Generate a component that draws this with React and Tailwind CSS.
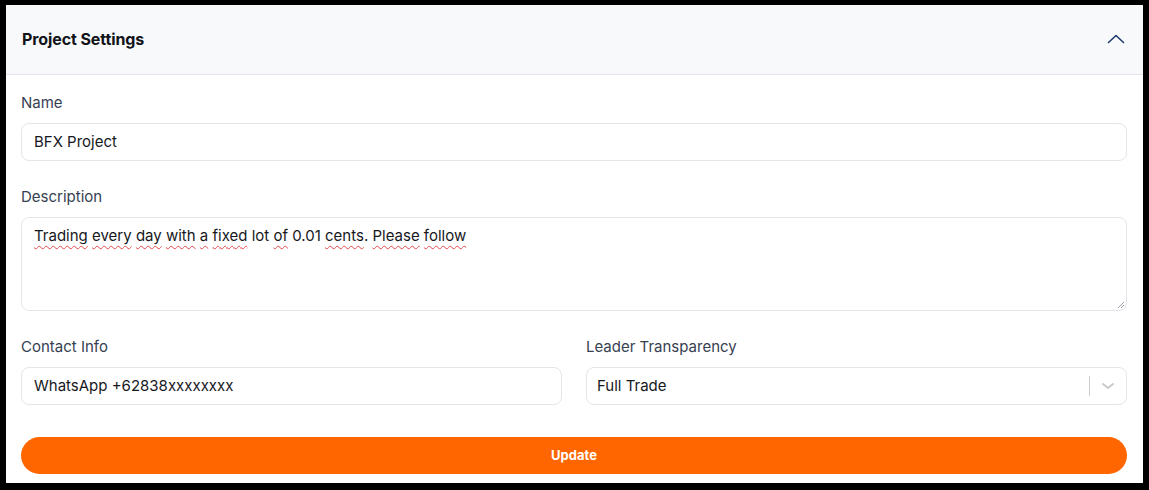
import React from "react";

const font = { fontFamily: "Inter, 'Liberation Sans', sans-serif" };

function W({ children, u = true }) {
  return u ? (
    <span className="underline decoration-wavy decoration-[#e5484d] decoration-1 underline-offset-[4px]">{children}</span>
  ) : (
    <span>{children}</span>
  );
}

export default function App() {
  return (
    <div className="w-[1149px] h-[490px] bg-black pt-[5px] pl-[6px]" style={font}>
      <div className="w-[1137px] h-[478px] bg-white flex flex-col">
        <div className="h-[70px] bg-[#f8f9fb] border-b border-[#e3e5ea] flex items-center justify-between pl-4 pr-[17px] pb-[2px]">
          <span className="text-[16px] font-bold text-[#111318] tracking-[-0.1px]">Project Settings</span>
          <svg width="20" height="12" viewBox="0 0 20 12" fill="none">
            <path d="M2.5 9.5 L10 2.5 L17.5 9.5" stroke="#1f3a6b" strokeWidth="1.6" strokeLinecap="round" strokeLinejoin="round" />
          </svg>
        </div>
        <div className="pl-[15px] pr-[16px] pt-[17px] flex flex-col">
          <label className="text-[15px] leading-[22px] text-[#364152] mb-[9px]">Name</label>
          <div className="h-[38px] border border-[#e3e5ea] rounded-[8px] flex items-center px-3 text-[15px] text-[#16181d]">
            BFX Project
          </div>
          <label className="text-[15px] leading-[22px] text-[#364152] mt-[25px] mb-[9px]">Description</label>
          <div className="relative h-[94px] border border-[#e3e5ea] rounded-[8px] px-3 pt-[7px] text-[15px] leading-[22px] text-[#16181d]">
            <W>Trading</W> <W>every</W> <W>day</W> <W>with</W> <W>a</W> <W>fixed</W> <W u={false}>lot</W> <W>of</W>{" "}
            <W u={false}>0.01</W> <W>cents</W>. <W>Please</W> <W>follow</W>
            <svg className="absolute right-[1px] bottom-[1px]" width="8" height="8" viewBox="0 0 8 8">
              <path d="M7 1 L1 7 M7 4 L4 7" stroke="#9aa0a6" strokeWidth="1" />
            </svg>
          </div>
          <div className="grid grid-cols-2 gap-6 mt-[25px]">
            <div className="flex flex-col">
              <label className="text-[15px] leading-[22px] text-[#364152] mb-[9px]">Contact Info</label>
              <div className="h-[38px] border border-[#e3e5ea] rounded-[8px] flex items-center px-3 text-[15px] text-[#16181d]">
                WhatsApp +62838xxxxxxxx
              </div>
            </div>
            <div className="flex flex-col">
              <label className="text-[15px] leading-[22px] text-[#364152] mb-[9px]">Leader Transparency</label>
              <div className="h-[38px] border border-[#e3e5ea] rounded-[8px] flex items-center pl-[10px] text-[15px] text-[#16181d]">
                <span className="flex-1">Full Trade</span>
                <span className="w-px h-[20px] bg-[#cccccc]"></span>
                <span className="w-[36px] flex items-center justify-center">
                  <svg width="14" height="8" viewBox="0 0 14 8" fill="none">
                    <path d="M2 2 L7 6 L12 2" stroke="#c8c8c8" strokeWidth="1.8" strokeLinecap="round" strokeLinejoin="round" />
                  </svg>
                </span>
              </div>
            </div>
          </div>
          <button className="mt-[32px] h-[37px] rounded-full bg-[#ff6600] text-white text-[13px] font-bold flex items-center justify-center">
            Update
          </button>
        </div>
      </div>
    </div>
  );
}
